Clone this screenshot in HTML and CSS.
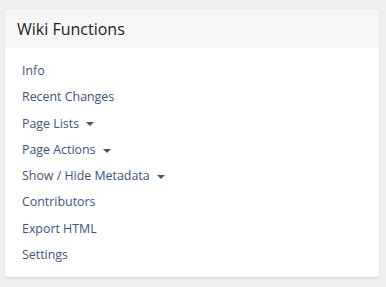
FILE: index.html
```html
<!DOCTYPE html>
<html lang="en">
<head>
    <meta charset="UTF-8">
    <title>Wiki Functions</title>
    <link rel="stylesheet" href="styles.css">
</head>
<body>
    <div class="panel">
        <div class="panel-heading">Wiki Functions</div>
        <ul class="panel-links">
            <li><a href="#">Info</a></li>
            <li><a href="#">Recent Changes</a></li>
            <li><a href="#" class="dropdown">Page Lists <span class="caret"></span></a></li>
            <li><a href="#" class="dropdown">Page Actions <span class="caret"></span></a></li>
            <li><a href="#" class="dropdown">Show / Hide Metadata <span class="caret"></span></a></li>
            <li><a href="#">Contributors</a></li>
            <li><a href="#">Export HTML</a></li>
            <li><a href="#">Settings</a></li>
        </ul>
    </div>
</body>
</html>
```

FILE: styles.css
```css
body {
    margin: 0;
    padding: 10px 7px 10px 5px;
    background: #efefef;
    font-family: "Open Sans", Arial, sans-serif;
}

.panel {
    background: #fff;
    border-radius: 2px;
    box-shadow: 0 1px 2px rgba(0, 0, 0, 0.12);
}

.panel-heading {
    height: 38px;
    line-height: 38px;
    padding-left: 12px;
    background: #f7f7f7;
    color: #222;
    font-size: 16px;
}

.panel-links {
    list-style: none;
    margin: 0;
    padding: 8px 17px 11px;
}

.panel-links li {
    height: 26.3px;
    line-height: 26px;
}

.panel-links a {
    color: #3e5479;
    font-size: 12.4px;
    text-decoration: none;
}

.caret {
    display: inline-block;
    width: 0;
    height: 0;
    margin-left: 4px;
    vertical-align: middle;
    border-top: 4px solid #3e5479;
    border-left: 4px solid transparent;
    border-right: 4px solid transparent;
}
```
